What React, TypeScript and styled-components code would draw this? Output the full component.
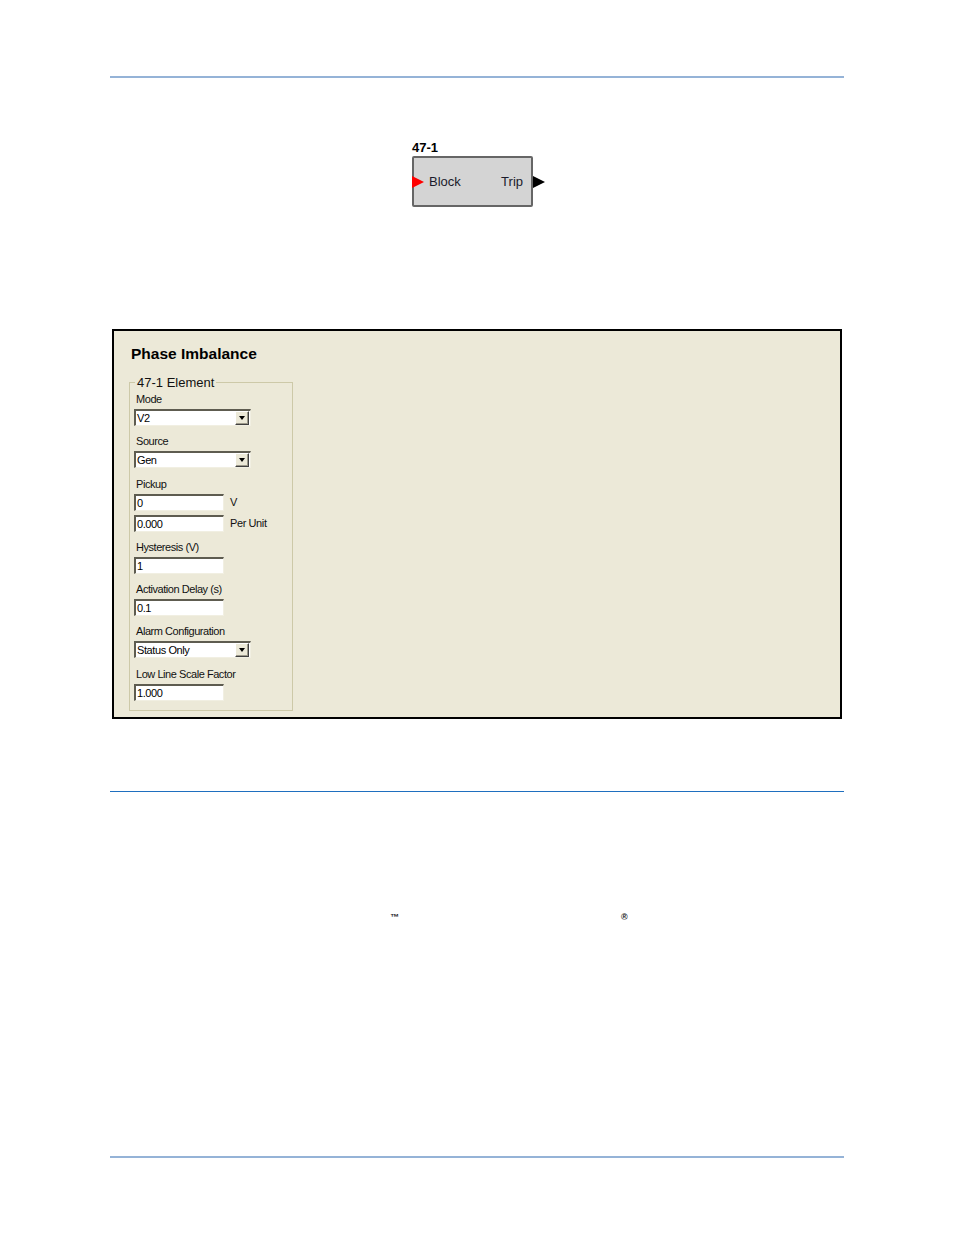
import React from "react";
import styled, { createGlobalStyle } from "styled-components";

const Global = createGlobalStyle`
  html, body { margin: 0; padding: 0; background: #ffffff; }
  body { font-family: "Liberation Sans", Arial, sans-serif; color: #000; }
`;

const Page = styled.div`
  width: 734px;
  padding-left: 110px;
  padding-top: 76px;
  padding-bottom: 76px;
`;

const Rule = styled.div<{ $h: number; $c: string; $mt?: number }>`
  height: ${(p) => p.$h}px;
  background: ${(p) => p.$c};
  margin-top: ${(p) => p.$mt ?? 0}px;
`;

const Diagram = styled.div`
  margin-top: 63px;
  padding-left: 302px;
  display: flex;
  flex-direction: column;
  align-items: flex-start;
`;

const BlockLabel = styled.div`
  font-weight: bold;
  font-size: 13px;
  line-height: 14px;
  margin-bottom: 1px;
`;

const BlockRow = styled.div`
  display: flex;
  align-items: center;
`;

const BlockBox = styled.div`
  box-sizing: border-box;
  width: 121px;
  height: 51px;
  background: #d4d4d4;
  border: 2px solid #666666;
  border-radius: 2px;
  display: flex;
  align-items: center;
  padding-right: 8px;
  font-size: 13px;
  color: #1b1b2b;
`;

const Arrow = styled.div<{ $c: string; $ml: number }>`
  width: 0;
  height: 0;
  border-top: 6px solid transparent;
  border-bottom: 6px solid transparent;
  border-left: 12px solid ${(p) => p.$c};
  margin-left: ${(p) => p.$ml}px;
  flex: none;
`;

const PortText = styled.span<{ $grow?: boolean }>`
  flex: ${(p) => (p.$grow ? 1 : "none")};
  margin-left: ${(p) => (p.$grow ? 5 : 0)}px;
`;

const Panel = styled.div`
  margin-top: 122px;
  margin-left: 2px;
  width: 730px;
  box-sizing: border-box;
  border: 2px solid #000;
  background: #ece9d8;
  padding: 14px 0 6px 15px;
`;

const Title = styled.div`
  font-weight: bold;
  font-size: 15.5px;
  line-height: 18px;
  padding-left: 2px;
  margin-bottom: 12px;
  color: #000;
`;

const Fieldset = styled.fieldset`
  margin: 0;
  width: 164px;
  box-sizing: border-box;
  border: 1px solid #cdc9a8;
  padding: 3px 4px 9px 4px;
  display: flex;
  flex-direction: column;
  gap: 9.3px;
`;

const Legend = styled.legend`
  font-size: 13px;
  line-height: 15px;
  padding: 0 2px;
  margin-left: 1px;
  color: #111;
`;

const Group = styled.div`
  display: flex;
  flex-direction: column;
  gap: 4px;
`;

const Label = styled.div`
  font-size: 11px;
  line-height: 13px;
  letter-spacing: -0.45px;
  padding-left: 2px;
  margin-bottom: -1px;
  color: #111;
`;

const InputRow = styled.div`
  display: flex;
  align-items: center;
  gap: 6px;
`;

const Field = styled.div<{ $w: number }>`
  box-sizing: border-box;
  width: ${(p) => p.$w}px;
  height: 17px;
  background: #fff;
  border-style: solid;
  border-width: 2px 1px 1px 2px;
  border-color: #5e5c50 #f1efe2 #f1efe2 #5e5c50;
  display: flex;
  align-items: center;
  padding-left: 1px;
  font-size: 11px;
  letter-spacing: -0.4px;
  color: #000;
  overflow: hidden;
`;

const FieldText = styled.span`
  flex: 1;
`;

const DropButton = styled.div`
  box-sizing: border-box;
  width: 14px;
  height: 14px;
  margin-right: 1px;
  background: #ece9d8;
  border-style: solid;
  border-width: 1px;
  border-color: #fff #404040 #404040 #fff;
  box-shadow: inset -1px -1px 0 #9d9a8b;
  display: flex;
  align-items: center;
  justify-content: center;
`;

const Caret = styled.div`
  width: 0;
  height: 0;
  border-left: 3.5px solid transparent;
  border-right: 3.5px solid transparent;
  border-top: 4px solid #000;
`;

const Unit = styled.span`
  font-size: 11px;
  letter-spacing: -0.4px;
  color: #111;
`;

const Marks = styled.div`
  margin-top: 121px;
  padding-left: 280px;
  display: flex;
  align-items: flex-start;
  gap: 222px;
  font-size: 9px;
  font-weight: bold;
  line-height: 9px;
  color: #222;
`;

const Select = ({ value }: { value: string }) => (
  <Field $w={117}>
    <FieldText>{value}</FieldText>
    <DropButton>
      <Caret />
    </DropButton>
  </Field>
);

const Text = ({ value }: { value: string }) => (
  <Field $w={90}>
    <FieldText>{value}</FieldText>
  </Field>
);

export default function App() {
  return (
    <>
      <Global />
      <Page>
        <Rule $h={2} $c="#95b3d7" />
        <Diagram>
          <BlockLabel>47-1</BlockLabel>
          <BlockRow>
            <BlockBox>
              <Arrow $c="#ff0000" $ml={-2} />
              <PortText $grow>Block</PortText>
              <PortText>Trip</PortText>
            </BlockBox>
            <Arrow $c="#000000" $ml={0} />
          </BlockRow>
        </Diagram>
        <Panel>
          <Title>Phase Imbalance</Title>
          <Fieldset>
            <Legend>47-1 Element</Legend>
            <Group>
              <Label>Mode</Label>
              <Select value="V2" />
            </Group>
            <Group>
              <Label>Source</Label>
              <Select value="Gen" />
            </Group>
            <Group>
              <Label>Pickup</Label>
              <InputRow>
                <Text value="0" />
                <Unit>V</Unit>
              </InputRow>
              <InputRow>
                <Text value="0.000" />
                <Unit>Per Unit</Unit>
              </InputRow>
            </Group>
            <Group>
              <Label>Hysteresis (V)</Label>
              <Text value="1" />
            </Group>
            <Group>
              <Label>Activation Delay (s)</Label>
              <Text value="0.1" />
            </Group>
            <Group>
              <Label>Alarm Configuration</Label>
              <Select value="Status Only" />
            </Group>
            <Group>
              <Label>Low Line Scale Factor</Label>
              <Text value="1.000" />
            </Group>
          </Fieldset>
        </Panel>
        <Rule $h={1} $c="#1f6fbf" $mt={72} />
        <Marks>
          <span>™</span>
          <span>®</span>
        </Marks>
        <Rule $h={2} $c="#95b3d7" $mt={234} />
      </Page>
    </>
  );
}
